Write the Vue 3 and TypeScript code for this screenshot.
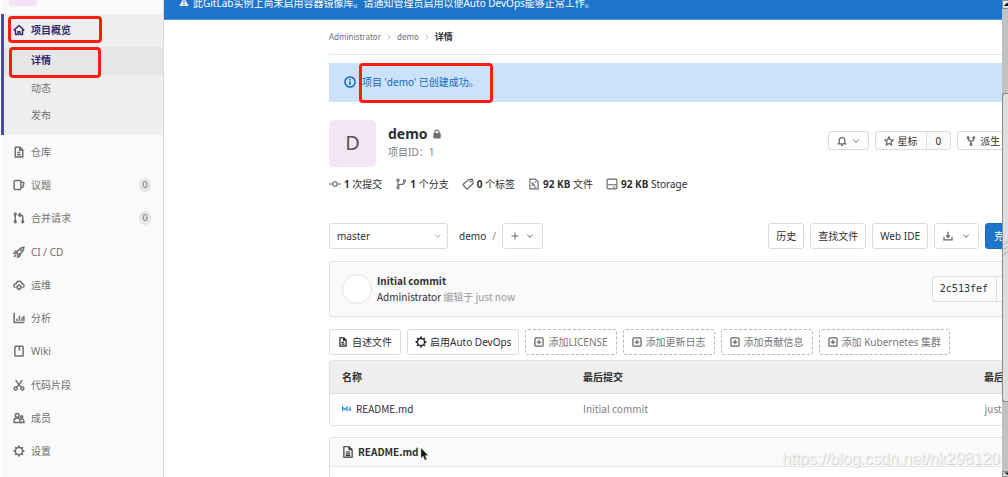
<script setup lang="ts">
import { ref } from 'vue'

interface NavItem { label: string; icon: string; count?: number }

const icons: Record<string, string> = {
  home: '<path d="M1 8.500 8 2l7 6.500M3.300 8v6h3.400v-3.600h2.600V14h3.400V8" stroke-linejoin="round"/>',
  doc: '<path d="M3 1.500h6.500L13 5v9.500H3zM9 2v3.500h4M5.500 8.500h4M5.500 11.500h5"/>',
  issues: '<rect x="1.500" y="2" width="9" height="12" rx="1.500"/><path d="M11 3.500 14.500 5l-1 5-2.500 2"/>',
  merge: '<path d="M3 4v9M13 13V7q0-3-3-3H8M10 1.500 7.500 4 10 6.500"/><circle cx="3" cy="3" r="1.200"/><circle cx="3" cy="13" r="1.200"/><circle cx="13" cy="13" r="1.200"/>',
  rocket: '<path d="M5 9.500Q7 3 14.500 1.500 14 9 7 11.500zM6 6.500l-3 .5-1.500 3L5 9.500M9.500 10.500 9 13.500l-3 1.500 1-3.500M1.500 14.500l2.500-2.500"/><circle cx="10.500" cy="5.500" r=".5"/>',
  cloud: '<path d="M3.500 11.500C0 10.500 1 6 4 6.500 5 1.500 11.500 2 12 6.500c3.500 0 4 4 .5 5"/><circle cx="8" cy="11" r="2.500"/><path d="M8 7v1.500M4.500 11h1M10.500 11h1M8 13.500V15"/>',
  chart: '<path d="M1.500 1v13H15M5 12V9M8.500 12V5M12 12V7M14.500 12V5"/>',
  book: '<rect x="2.500" y="1.500" width="11" height="13" rx="1"/><path d="M8.500 2v5.500"/>',
  scissors: '<path d="m3.500 1.500 7.500 9.500M12.500 1.500 5 11"/><circle cx="3.500" cy="12.500" r="2"/><circle cx="12.500" cy="12.500" r="2"/>',
  users: '<circle cx="5.500" cy="4.500" r="2.500"/><path d="M1.500 14v-2.500q0-3.500 4-3.500t4 3.500V14z"/><circle cx="11.500" cy="6.500" r="1.500"/><path d="M10 9.500q4.500-.5 4.500 3V14h-5"/>',
  gear: '<circle cx="8" cy="8" r="4.800"/><path d="M8 .8V3M8 13v2.200M.8 8H3M13 8h2.200M2.900 2.900l1.600 1.600M11.500 11.500l1.600 1.600M2.900 13.100l1.600-1.600M11.500 4.500l1.600-1.600" stroke-width="2.600"/>',
  warning: '<path d="M8 1 15.500 14.500H.5z" fill="currentColor" stroke="none"/><path d="M8 5.500v4M8 11v2" stroke="#1f75cb"/>',
  info: '<circle cx="8" cy="8" r="6.800"/><path d="M8 7v5M8 4v2"/>',
  lock: '<rect x="2" y="6.500" width="12" height="8.500" rx="1.500" fill="currentColor" stroke="none"/><path d="M4.800 7V5a3.200 3.200 0 0 1 6.400 0v2"/>',
  commit: '<circle cx="8" cy="8" r="3"/><path d="M0 8h5M11 8h5"/>',
  branch: '<circle cx="4" cy="3" r="1.500"/><circle cx="4" cy="13" r="1.500"/><circle cx="12.500" cy="4" r="1.500"/><path d="M4 4.500v7Q4 8.500 8 8.500q4.500 0 4.500-3"/>',
  tag: '<path d="M8.500 2.500 14 1.500l1 5.500-7 7q-1 1-2 0l-4-4q-1-1 0-2z" stroke-linejoin="round"/><circle cx="11.700" cy="4.600" r=".6"/>',
  files: '<path d="M2.500 1.500h7L13.500 5v9.500h-11zM5 6l4 4M5 10.500 7 8.500M8 12h3M9 5.500h2"/>',
  disk: '<rect x="1.500" y="1.500" width="13" height="13" rx="1.500"/><path d="M2 9h12M9.500 12h3"/>',
  bell: '<path d="M1 12.500h14M3.500 12V7a4.500 4.500 0 0 1 9 0v5M6.500 14.800h3M8 1v1.500"/>',
  star: '<path d="m8 1.500 2 4.300 4.700.6-3.500 3.200.9 4.700L8 12l-4.100 2.300.9-4.700L1.300 6.400 6 5.800z"/>',
  fork: '<path d="M3.500 4q0 4 4.500 4.500Q12.500 8 12.500 4M8 8.500V13"/><circle cx="3.500" cy="2.800" r="1.300"/><circle cx="12.500" cy="2.800" r="1.300"/><circle cx="8" cy="13.500" r="1.300"/>',
  download: '<path d="M1.500 9v5h13V9M8 1v8M5 7l3 3 3-3"/>',
  chevron: '<path d="m2.500 5.500 5.500 5 5.500-5"/>',
  right: '<path d="m5 3 5 5-5 5"/>',
  plus: '<path d="M8 1v14M1 8h14"/>',
  add: '<rect x="1.500" y="1.500" width="13" height="13" rx="1.500"/><path d="M8 4.500v7M4.500 8h7"/>',
  markdown: '<path d="M1 12V5l3.500 4L8 5v7M12.500 4.500V9"/><path d="M9.500 8h6l-3 4z" fill="currentColor" stroke="none"/>',
  text: '<path d="M2.500 1h7L13.500 5v10h-11zM9.500 1.500V5H13M5 8h6M5 10.500h6M5 12.800h6"/>',
}

const navItems: NavItem[] = [
  { label: '仓库', icon: 'doc' },
  { label: '议题', icon: 'issues', count: 0 },
  { label: '合并请求', icon: 'merge', count: 0 },
  { label: 'CI / CD', icon: 'rocket' },
  { label: '运维', icon: 'cloud' },
  { label: '分析', icon: 'chart' },
  { label: 'Wiki', icon: 'book' },
  { label: '代码片段', icon: 'scissors' },
  { label: '成员', icon: 'users' },
  { label: '设置', icon: 'gear' },
]
const stats = [
  { icon: 'commit', value: '1', label: '次提交' },
  { icon: 'branch', value: '1', label: '个分支' },
  { icon: 'tag', value: '0', label: '个标签' },
  { icon: 'files', value: '92 KB', label: '文件' },
  { icon: 'disk', value: '92 KB', label: 'Storage' },
]
const suggestions = ['添加LICENSE', '添加更新日志', '添加贡献信息', '添加 Kubernetes 集群']
const branch = ref('master')
</script>

<template>
  <div class="page">
    <aside class="sidebar">
      <div class="sidebar-top"><span class="mini-avatar"></span></div>
      <nav class="nav">
        <div class="overview">
          <a class="overview-title marked" href="#"><svg class="icon" viewBox="0 0 16 16" v-html="icons.home"></svg>项目概览</a>
          <a class="sub current marked" href="#">详情</a>
          <a class="sub" href="#">动态</a>
          <a class="sub" href="#">发布</a>
        </div>
        <ul class="nav-list">
          <li v-for="item in navItems" :key="item.label">
            <a href="#">
              <svg class="icon" viewBox="0 0 16 16" v-html="icons[item.icon]"></svg>
              <span>{{ item.label }}</span>
              <span v-if="item.count !== undefined" class="count">{{ item.count }}</span>
            </a>
          </li>
        </ul>
      </nav>
    </aside>

    <div class="main">
      <div class="banner">
        <svg class="icon small" viewBox="0 0 16 16" v-html="icons.warning"></svg>
        <span>此GitLab实例上尚未启用容器镜像库。请通知管理员启用以便Auto DevOps能够正常工作。</span>
      </div>
      <main class="content">
        <nav class="crumbs">
          <a href="#">Administrator</a>
          <svg class="icon tiny" viewBox="0 0 16 16" v-html="icons.right"></svg>
          <a href="#">demo</a>
          <svg class="icon tiny" viewBox="0 0 16 16" v-html="icons.right"></svg>
          <strong>详情</strong>
        </nav>

        <div class="notice" role="status">
          <svg class="icon" viewBox="0 0 16 16" v-html="icons.info"></svg>
          <span class="notice-text marked">项目 'demo' 已创建成功。</span>
        </div>

        <header class="project">
          <div class="avatar">D</div>
          <div class="project-name">
            <h1>demo <svg class="icon small" viewBox="0 0 16 16" v-html="icons.lock"></svg></h1>
            <p>项目ID：1</p>
          </div>
          <div class="project-actions">
            <button class="btn short bell" aria-label="通知">
              <svg class="icon small" viewBox="0 0 16 16" v-html="icons.bell"></svg>
              <svg class="icon tiny" viewBox="0 0 16 16" v-html="icons.chevron"></svg>
            </button>
            <div class="group">
              <button class="btn short"><svg class="icon small" viewBox="0 0 16 16" v-html="icons.star"></svg>星标</button>
              <a class="btn short number" href="#">0</a>
            </div>
            <div class="group">
              <button class="btn short"><svg class="icon small" viewBox="0 0 16 16" v-html="icons.fork"></svg>派生</button>
              <a class="btn short number" href="#">0</a>
            </div>
          </div>
        </header>

        <div class="stats">
          <a v-for="s in stats" :key="s.icon" href="#">
            <svg class="icon" viewBox="0 0 16 16" v-html="icons[s.icon]"></svg>
            <span><strong>{{ s.value }}</strong> {{ s.label }}</span>
          </a>
        </div>

        <div class="tree-bar">
          <div class="select-wrap">
            <select v-model="branch" aria-label="分支"><option>master</option></select>
            <svg class="icon tiny" viewBox="0 0 16 16" v-html="icons.chevron"></svg>
          </div>
          <a class="path" href="#">demo</a>
          <span class="slash">/</span>
          <button class="btn add" aria-label="添加">
            <svg class="icon tiny" viewBox="0 0 16 16" v-html="icons.plus"></svg>
            <svg class="icon tiny" viewBox="0 0 16 16" v-html="icons.chevron"></svg>
          </button>
          <div class="tree-actions">
            <button class="btn">历史</button>
            <button class="btn">查找文件</button>
            <button class="btn">Web IDE</button>
            <button class="btn download" aria-label="下载">
              <svg class="icon small" viewBox="0 0 16 16" v-html="icons.download"></svg>
              <svg class="icon tiny" viewBox="0 0 16 16" v-html="icons.chevron"></svg>
            </button>
            <button class="btn primary">克隆<svg class="icon tiny" viewBox="0 0 16 16" v-html="icons.chevron"></svg></button>
          </div>
        </div>

        <section class="commit">
          <span class="commit-avatar"></span>
          <div class="commit-text">
            <a class="commit-title" href="#">Initial commit</a>
            <p><a href="#">Administrator</a> 编辑于 just now</p>
          </div>
          <div class="group">
            <a class="btn hash" href="#">2c513fef</a>
            <button class="btn copy" aria-label="复制"><svg class="icon" viewBox="0 0 16 16" v-html="icons.doc"></svg></button>
          </div>
        </section>

        <div class="suggestions">
          <a class="btn solid" href="#"><svg class="icon small" viewBox="0 0 16 16" v-html="icons.doc"></svg>自述文件</a>
          <a class="btn solid tight" href="#"><svg class="icon" viewBox="0 0 16 16" v-html="icons.gear"></svg>启用Auto DevOps</a>
          <a v-for="s in suggestions" :key="s" class="btn dashed" href="#"><svg class="icon small" viewBox="0 0 16 16" v-html="icons.add"></svg>{{ s }}</a>
        </div>

        <div class="table-box">
          <table>
            <thead><tr><th class="col-name">名称</th><th>最后提交</th><th class="col-date">最后更新</th></tr></thead>
            <tbody>
              <tr>
                <td class="col-name"><a class="file" href="#"><svg class="icon md" viewBox="0 0 16 16" v-html="icons.markdown"></svg>README.md</a></td>
                <td>Initial commit</td>
                <td class="col-date">just now</td>
              </tr>
            </tbody>
          </table>
        </div>

        <section class="readme">
          <h2><svg class="icon" viewBox="0 0 16 16" v-html="icons.text"></svg>README.md</h2>
        </section>
      </main>
    </div>

    <div class="scrollbar" aria-hidden="true">
      <span class="arrow"><svg viewBox="0 0 6 9"><path d="M1 6 5 2l1 1v3z" /></svg></span>
      <span class="thumb"><svg viewBox="0 0 6 18"><path d="M1 6l5-5M1 12l5-5M1 18l5-5" /></svg></span>
      <span class="arrow"><svg viewBox="0 0 6 9"><path d="M1 3h5v3z" /></svg></span>
    </div>
    <span class="watermark">https://blog.csdn.net/nk298120</span>
    <svg class="cursor" viewBox="0 0 9 14"><path d="M1 1v10l2.200-2 1.700 4 1.800-.8L5 8.500h3z" /></svg>
  </div>
</template>

<style>
body { margin: 0; background: #fff; }
</style>

<style scoped>
.page {
  position: relative;
  display: flex;
  height: 100vh;
  overflow: hidden;
  font: 10px/16px "Noto Sans", "Noto Sans CJK SC", sans-serif;
  color: #303030;
}
.page *, .page *::after { box-sizing: border-box; }
a { color: inherit; text-decoration: none; }
p, h1, h2, ul { margin: 0; padding: 0; }
.icon {
  flex: none;
  width: 12px;
  height: 12px;
  fill: none;
  stroke: currentColor;
  stroke-width: 2;
}
.icon.small { width: 10px; height: 10px; }
.icon.tiny { width: 8px; height: 8px; }

.sidebar {
  flex: none;
  display: flex;
  flex-direction: column;
  width: 163px;
  margin-left: 1px;
  background: #fafafa;
  border-right: 1px solid #dcdcdc;
  color: #707070;
}
.sidebar-top { height: 14px; padding-left: 8px; }
.mini-avatar { display: block; width: 28px; height: 6px; background: #f3e5f5; border-radius: 0 0 3px 3px; }
.nav { flex: 1; display: flex; flex-direction: column; }
.overview {
  display: flex;
  flex-direction: column;
  padding-bottom: 6px;
  background: #efefef;
  border-left: 3px solid #4b4ba3;
}
.overview-title {
  display: flex;
  align-items: center;
  gap: 6px;
  height: 33px;
  padding: 0 0 2px 9px;
  color: #2f2a6b;
  font-weight: 700;
}
.sub { height: 27px; padding-left: 27px; line-height: 27px; }
.sub.current { height: 28px; background: #e6e6e6; color: #2f2a6b; font-weight: 700; }
.nav-list { flex: 1; display: flex; flex-direction: column; padding-bottom: 9px; list-style: none; }
.nav-list li { flex: 1; display: flex; }
.nav-list a { flex: 1; display: flex; align-items: center; gap: 6px; padding: 0 12px; }
.count { margin-left: auto; width: 12px; border-radius: 8px; background: #e6e6e6; text-align: center; line-height: 14px; font-size: 9px; }

.marked { position: relative; }
.marked::after {
  content: "";
  position: absolute;
  border: 3px solid #fb1d10;
  border-radius: 4px;
  z-index: 2;
}
.overview-title::after { left: 4px; top: 2px; width: 94px; height: 27px; }
.sub.current::after { left: 5px; top: 0; width: 92px; height: 31px; }
.notice-text::after { left: -3px; top: -11px; width: 134px; height: 40px; }

.main { flex: 1; min-width: 0; }
.banner {
  display: flex;
  align-items: flex-end;
  gap: 4px;
  height: 20px;
  padding: 0 15px 8px;
  overflow: hidden;
  background: #1f75cb;
  border-bottom: 1px solid #5793d3;
  color: #fff;
  white-space: nowrap;
}
.banner .icon { margin-bottom: 4px; }
.content { margin: 0 -35px 0 165px; }
.crumbs {
  display: flex;
  align-items: center;
  gap: 4px;
  height: 35px;
  border-bottom: 1px solid #e5e5e5;
  color: #707070;
  font-size: 8px;
}
.crumbs .icon { stroke-width: 1; }
.crumbs strong { color: #303030; font-size: 9px; }
.notice {
  display: flex;
  align-items: center;
  gap: 6px;
  height: 39px;
  margin-top: 8px;
  padding: 0 0 2px 15px;
  background: #cbe2f9;
  color: #1068bf;
}
.project { display: flex; align-items: flex-start; margin-top: 18px; }
.avatar {
  width: 47px;
  height: 47px;
  border-radius: 5px;
  background: #f3e5f5;
  color: #555;
  font-size: 20px;
  line-height: 46px;
  text-align: center;
}
.project-name { margin-left: 12px; padding-top: 4px; }
h1 { font-size: 14px; line-height: 20px; }
h1 .icon { margin-left: 1px; color: #707070; }
.project-name p { color: #808080; }
.project-actions { display: flex; gap: 6px; margin: 11px 3px 0 auto; }
.btn {
  display: inline-flex;
  align-items: center;
  justify-content: center;
  gap: 5px;
  height: 26px;
  padding: 0 7px;
  border: 1px solid #dcdcdc;
  border-radius: 3px;
  background: #fff;
  color: #303030;
  font: inherit;
  white-space: nowrap;
}
.btn .icon { color: #666; }
.btn.short { height: 19px; padding: 0 8px; gap: 4px; }
.btn.bell { gap: 5px; }
.btn.short.number { padding: 0 9px; background: #fafafa; }
.group { display: flex; }
.group .btn:first-child { border-radius: 3px 0 0 3px; }
.group .btn:last-child { margin-left: -1px; border-radius: 0 3px 3px 0; }

.stats { display: flex; gap: 13px; margin-top: 9px; }
.stats a { display: flex; align-items: center; gap: 3px; }
.stats .icon { color: #666; stroke-width: 1.500; }

.tree-bar { display: flex; align-items: center; margin-top: 31px; }
.select-wrap { position: relative; display: flex; width: 119px; }
.select-wrap select {
  width: 100%;
  height: 26px;
  padding: 0 7px;
  appearance: none;
  border: 1px solid #dcdcdc;
  border-radius: 3px;
  background: #fff;
  color: #303030;
  font: inherit;
}
.select-wrap .icon { position: absolute; right: 6px; top: 9px; color: #aaa; pointer-events: none; }
.path { margin-left: 11px; }
.slash { margin: 0 6px; color: #888; }
.btn.add { width: 41px; gap: 7px; }
.tree-actions { display: flex; gap: 6px; margin-left: auto; }
.btn.download { width: 45px; gap: 9px; }
.btn.primary { padding: 0 8px; gap: 6px; background: #1f75cb; border-color: #1b69b6; color: #fff; }
.btn.primary .icon { color: #fff; }

.commit {
  display: flex;
  align-items: center;
  margin-top: 12px;
  padding: 11px 12px;
  border: 1px solid #e0e0e0;
  border-radius: 3px;
  background: #fafafa;
}
.commit, table, h2 { font-family: "Noto Sans CJK SC", sans-serif; }
.commit-avatar { width: 30px; height: 30px; border: 1px solid #e3e3e3; border-radius: 50%; background: #fff; }
.commit-text { margin: 0 auto 0 5px; color: #999; }
.commit-text a { color: #303030; }
.commit-text .commit-title { display: block; font-weight: 700; }
.commit .btn { background: #fcfcfc; }
.btn.hash { padding: 0 8px 0 7px; font-family: "DejaVu Sans Mono", monospace; }
.btn.copy { padding: 0 7px; }

.suggestions { display: flex; gap: 6px; margin-top: 12px; }
.suggestions .btn { padding: 0 8px; gap: 4px; }
.suggestions .solid .icon { color: #303030; }
.suggestions .tight { padding: 0 7px; gap: 3px; }
.suggestions .dashed { border: 1px dashed #b8b8b8; color: #777; }

.table-box { margin-top: 5px; border: 1px solid #e0e0e0; border-radius: 3px; overflow: hidden; }
table { width: 100%; border-collapse: collapse; table-layout: fixed; }
th, td { height: 32px; padding: 0 12px; text-align: left; color: #808080; }
th { background: #efefef; border-bottom: 1px solid #dcdcdc; color: #303030; }
.col-name { width: 240px; }
th + th, td + td { padding-left: 13px; }
th.col-date, td.col-date { text-align: right; }
.file { display: flex; align-items: center; gap: 4px; color: #303030; }
.icon.md { width: 10px; height: 10px; color: #2f95e8; }

.readme { height: 80px; margin-top: 11px; border: 1px solid #e0e0e0; border-radius: 3px; }
h2 {
  display: flex;
  align-items: center;
  gap: 4px;
  height: 29px;
  padding-left: 12px;
  background: #fafafa;
  border-bottom: 1px solid #e5e5e5;
  font-size: 10px;
}
h2 .icon { stroke-width: 1.500; }

.scrollbar {
  position: relative;
  z-index: 1;
  flex: none;
  display: flex;
  flex-direction: column;
  justify-content: space-between;
  width: 6px;
  background: #c1c1c1;
}
.scrollbar span { display: flex; align-items: center; background: #dedede; border: 1px solid #8a8a8a; border-right: 0; }
.scrollbar svg { width: 6px; fill: #111; }
.scrollbar .arrow { height: 9px; }
.scrollbar .arrow:last-child { height: 6px; }
.scrollbar .thumb { height: 309px; margin-top: 14px; border-radius: 3px 0 0 3px; }
.scrollbar .thumb svg { fill: none; stroke: #999; }

.watermark {
  position: absolute;
  right: 8px;
  bottom: 8px;
  z-index: 1;
  color: #f4f4f4;
  font: 16px/20px "Liberation Sans", sans-serif;
  text-shadow: 1px 1px 1px #ccc;
}
.cursor { position: absolute; left: 420px; top: 447px; width: 9px; height: 14px; fill: #111; stroke: #aaa; stroke-width: 0.500; }
</style>
